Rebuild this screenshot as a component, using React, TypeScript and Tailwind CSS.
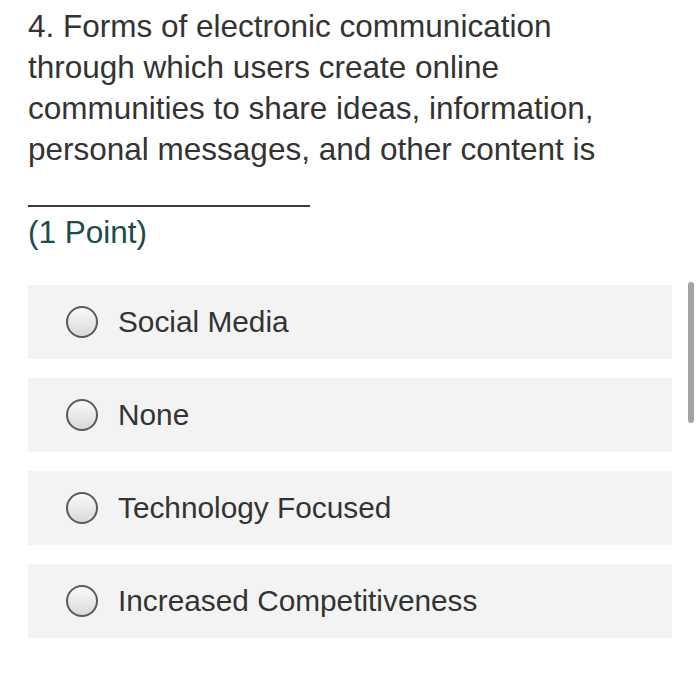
const options = ['Social Media', 'None', 'Technology Focused', 'Increased Competitiveness'];

function Radio() {
  return (
    <span className="block h-[32px] w-[32px] shrink-0 rounded-full border-2 border-[#5a5a5a] bg-gradient-to-b from-[#fafafa] to-[#d9d9d9]" />
  );
}

export default function App() {
  return (
    <div className="relative h-[685px] w-[700px] overflow-hidden bg-white font-['Liberation_Sans',Arial,sans-serif] text-[#333333]">
      <div className="pl-[28px] pr-[28px] pt-[6px]">
        <p className="text-[31.5px] leading-[41px]">
          4. Forms of electronic communication
          <br />
          through which users create online
          <br />
          communities to share ideas, information,
          <br />
          personal messages, and other content is
        </p>
        <div className="mt-[35px] h-[2px] w-[282px] bg-[#3a3a3a]" />
        <p className="mt-[5px] text-[31.5px] leading-[41px] text-[#1d4b4b]">(1 Point)</p>

        <div className="mt-[32px] flex flex-col gap-[19px]">
          {options.map((o) => (
            <div key={o} className="flex h-[74px] w-[644px] items-center gap-[20px] bg-[#f3f3f3] pl-[38px]">
              <Radio />
              <span className="text-[29.8px] leading-none">{o}</span>
            </div>
          ))}
        </div>
      </div>
      <div className="absolute left-[688px] top-[282px] h-[141px] w-[6px] rounded-full bg-[#a3a3a3]" />
    </div>
  );
}
